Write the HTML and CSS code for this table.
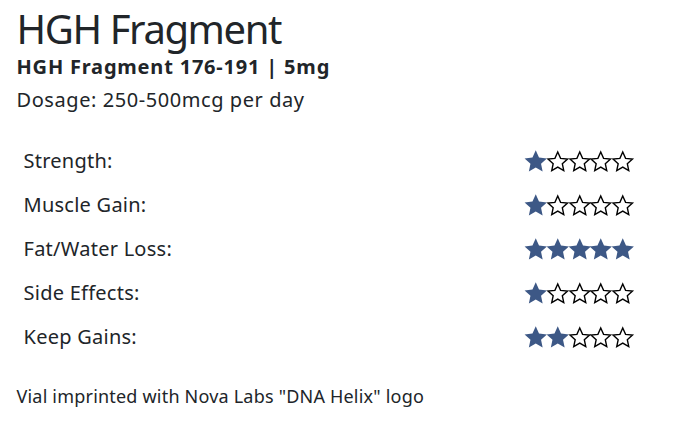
FILE: index.html
```html
<!DOCTYPE html>
<html lang="en">
<head>
<meta charset="utf-8">
<title>HGH Fragment</title>
<link rel="stylesheet" href="styles.css">
</head>
<body>
<svg width="0" height="0" class="defs">
  <defs>
    <polygon id="star-full" points="11,0.3 14.06,7.09 21.46,7.9 15.95,12.91 17.47,20.2 11,16.5 4.53,20.2 6.05,12.91 0.54,7.9 7.94,7.09"/>
    <polygon id="star-empty" points="11,1.9 13.65,7.86 20.13,8.53 15.28,12.89 16.64,19.27 11,16 5.36,19.27 6.72,12.89 1.87,8.53 8.35,7.86"/>
  </defs>
</svg>
<main class="product">
  <h1 class="title">HGH Fragment</h1>
  <h2 class="subtitle">HGH Fragment 176-191 | 5mg</h2>
  <p class="dosage">Dosage: 250-500mcg per day</p>
  <table class="ratings">
    <tr><td class="label">Strength:</td><td class="stars" data-n="1"></td></tr>
    <tr><td class="label">Muscle Gain:</td><td class="stars" data-n="1"></td></tr>
    <tr><td class="label">Fat/Water Loss:</td><td class="stars" data-n="5"></td></tr>
    <tr><td class="label">Side Effects:</td><td class="stars" data-n="1"></td></tr>
    <tr><td class="label">Keep Gains:</td><td class="stars" data-n="2"></td></tr>
  </table>
  <p class="note">Vial imprinted with Nova Labs "DNA Helix" logo</p>
</main>
<script>
document.querySelectorAll('.stars').forEach(function (td) {
  var n = +td.dataset.n, html = '';
  for (var i = 0; i < 5; i++) {
    var on = i < n;
    html += '<svg class="star ' + (on ? 'on' : 'off') + '" viewBox="0 0 22 21"><use href="#star-' + (on ? 'full' : 'empty') + '"/></svg>';
  }
  td.innerHTML = html;
});
</script>
</body>
</html>
```
FILE: styles.css
```css
html, body { margin: 0; padding: 0; background: #fff; }
body {
  font-family: "Noto Sans", "Open Sans", sans-serif;
  color: #212529;
}
.defs { position: absolute; }
.product { padding: 5px 16px 0 16.5px; width: 624px; }
.title {
  margin: 0;
  font-size: 40px;
  font-weight: 400;
  line-height: 48px;
  letter-spacing: -1.4px;
}
.subtitle {
  margin: 1.5px 0 0;
  font-size: 20px;
  font-weight: 700;
  line-height: 24px;
  letter-spacing: 0.8px;
}
.dosage {
  margin: 8.5px 0 0;
  font-size: 20px;
  line-height: 26px;
  letter-spacing: 0.57px;
}
.ratings {
  margin-top: 26px;
  width: 618px;
  border-collapse: collapse;
}
.ratings td { padding: 0; height: 44px; vertical-align: middle; }
.label { font-size: 20px; line-height: 24px; padding-left: 7px !important; letter-spacing: 0.25px; }
.stars { text-align: right; white-space: nowrap; font-size: 0; line-height: 0; }
.star { width: 23.5px; height: 22.4px; margin-left: -1.8px; vertical-align: middle; }
.star.on { fill: #3d5886; }
.star.off { fill: #fff; stroke: #000; stroke-width: 1.3; stroke-linejoin: miter; }
.note {
  margin: 24.6px 0 0;
  font-size: 18px;
  line-height: 24px;
  letter-spacing: 0.2px;
}
```
